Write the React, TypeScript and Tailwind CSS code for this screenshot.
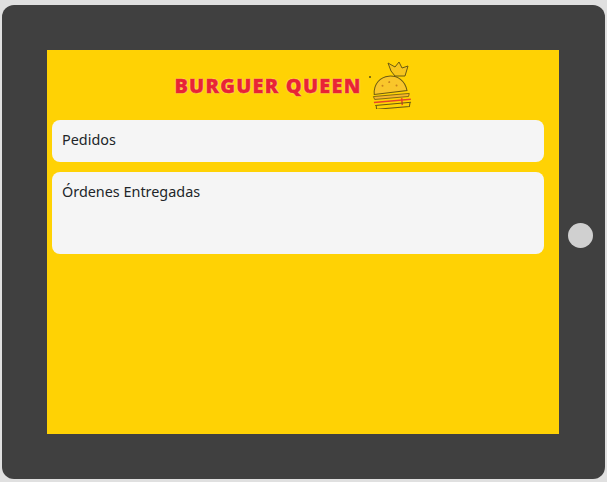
export default function App() {
  return (
    <div className="w-[607px] h-[482px] bg-[#e0e0e0] pt-[5px] pl-[2px] overflow-hidden" style={{ fontFamily: '"Noto Sans", sans-serif' }}>
      <div className="w-[603px] h-[474px] bg-[#404040] rounded-[12px] pl-[45px] pt-[45px] flex items-start">
        <div className="w-[512px] h-[384px] bg-[#ffd204] pl-[5px] pr-[15px] flex flex-col">
          <div className="h-[70px] flex items-center justify-center pr-[9px] gap-[7px]">
            <span className="text-[20px] tracking-[1.2px] text-[#e92434] leading-none pt-[2px]" style={{ fontFamily: '"Open Sans", sans-serif', fontWeight: 800, WebkitTextStroke: '0.4px #e92434', textShadow: '0 0 1.5px #fff6c0, 0 0 1px #fff6c0' }}>BURGUER QUEEN</span>
            <svg width="44" height="48" viewBox="0 0 44 48" fill="none" className="shrink-0">
              <g transform="rotate(-5 22 30)">
                <path d="M5 32 C5 21 13 15 21 15 C30 15 37 21 38 31 Z" fill="#f9c62b" stroke="#6b5a12" strokeWidth="1" />
                <circle cx="14" cy="24" r="1" fill="#c9831c" /><circle cx="21" cy="21" r="1" fill="#c9831c" /><circle cx="28" cy="25" r="1" fill="#c9831c" />
                <path d="M4 34 H40 L39 37 H5 Z" fill="#f7b52c" stroke="#6b5a12" strokeWidth="0.8" />
                <path d="M4 40 H41" stroke="#e8432a" strokeWidth="1.6" />
                <path d="M32 38 V45" stroke="#e8432a" strokeWidth="1.5" />
                <path d="M5 43 H41 M6 43 V47 H39 L40 43" stroke="#6b5a12" strokeWidth="1" />
              </g>
              <path d="M22 10 L19 2 L26 6 L30 1 L33 7 L39 5 L36 15 L26 15 Z" fill="#f6c51e" stroke="#6b5a12" strokeWidth="1" />
              <circle cx="1" cy="16" r="1" fill="#5c5010" />
            </svg>
          </div>
          <div className="h-[42px] bg-[#f5f5f5] rounded-[8px] px-[10px] pb-[3px] flex items-center text-[14.4px] text-[#212529] shrink-0">Pedidos</div>
          <div className="h-[82px] mt-[10px] bg-[#f5f5f5] rounded-[8px] px-[10px] pt-[9px] text-[14.4px] leading-[22px] text-[#212529] shrink-0">Órdenes Entregadas</div>
        </div>
        <div className="w-[25px] h-[25px] rounded-full bg-[#d0d0d0] ml-[9px] mt-[173px] shrink-0" />
      </div>
    </div>
  );
}
